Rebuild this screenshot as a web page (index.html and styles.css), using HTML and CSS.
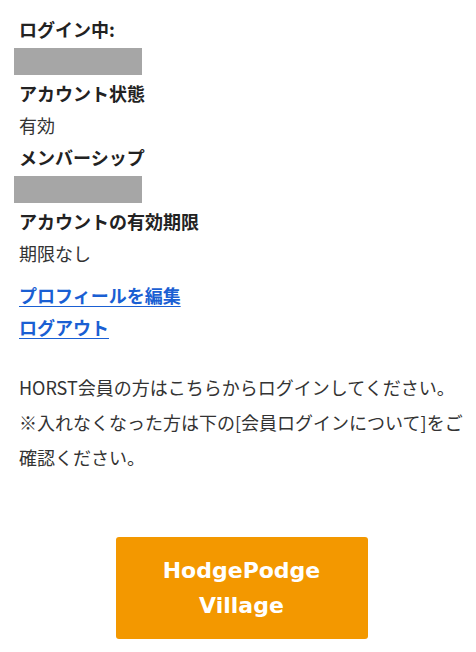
FILE: index.html
```html
<!DOCTYPE html>
<html lang="ja">
<head>
<meta charset="utf-8">
<link rel="stylesheet" href="styles.css">
</head>
<body>
<div class="page">
  <div class="info">
    <div class="label">ログイン中:</div>
    <div class="masked"></div>
    <div class="label">アカウント状態</div>
    <div class="value">有効</div>
    <div class="label">メンバーシップ</div>
    <div class="masked"></div>
    <div class="label">アカウントの有効期限</div>
    <div class="value">期限なし</div>
  </div>
  <div class="links">
    <a href="#" class="link">プロフィールを編集</a>
    <a href="#" class="link">ログアウト</a>
  </div>
  <p class="note">HORST会員の方はこちらからログインしてください。<br>※入れなくなった方は下の[会員ログインについて]をご確認ください。</p>
  <div class="btn-wrap">
    <a href="#" class="btn">HodgePodge<br>Village</a>
  </div>
</div>
</body>
</html>
```
FILE: styles.css
```css
html, body {
  margin: 0;
  padding: 0;
  background: #fff;
}
body {
  font-family: "Noto Sans CJK JP", "Noto Sans", sans-serif;
  font-size: 18px;
  color: #333;
}
.page {
  padding: 13px 10px 0 19px;
}
.info {
  display: flex;
  flex-direction: column;
}
.label {
  font-weight: bold;
  line-height: 32px;
  color: #222;
}
.value {
  line-height: 32px;
}
.masked {
  width: 128px;
  height: 27px;
  background: #a6a6a6;
  margin: 3px 0 2px -5px;
}
.links {
  display: flex;
  flex-direction: column;
  align-items: flex-start;
  margin-top: 10px;
}
.link {
  color: #1a5fd3;
  font-weight: bold;
  line-height: 32px;
  text-decoration: underline;
  text-underline-offset: 3px;
}
.note {
  margin: 27px 0 0;
  line-height: 35px;
  font-size: 18px;
}
.btn-wrap {
  display: flex;
  justify-content: center;
  margin-top: 62px;
}
.btn {
  display: flex;
  align-items: center;
  justify-content: center;
  width: 252px;
  height: 102px;
  box-sizing: border-box;
  background: #f39800;
  border-radius: 3px;
  color: #fff;
  font-family: "DejaVu Sans", sans-serif;
  font-weight: bold;
  font-size: 22px;
  line-height: 35px;
  text-align: center;
  text-decoration: none;
  margin-left: -2px;
}
```
